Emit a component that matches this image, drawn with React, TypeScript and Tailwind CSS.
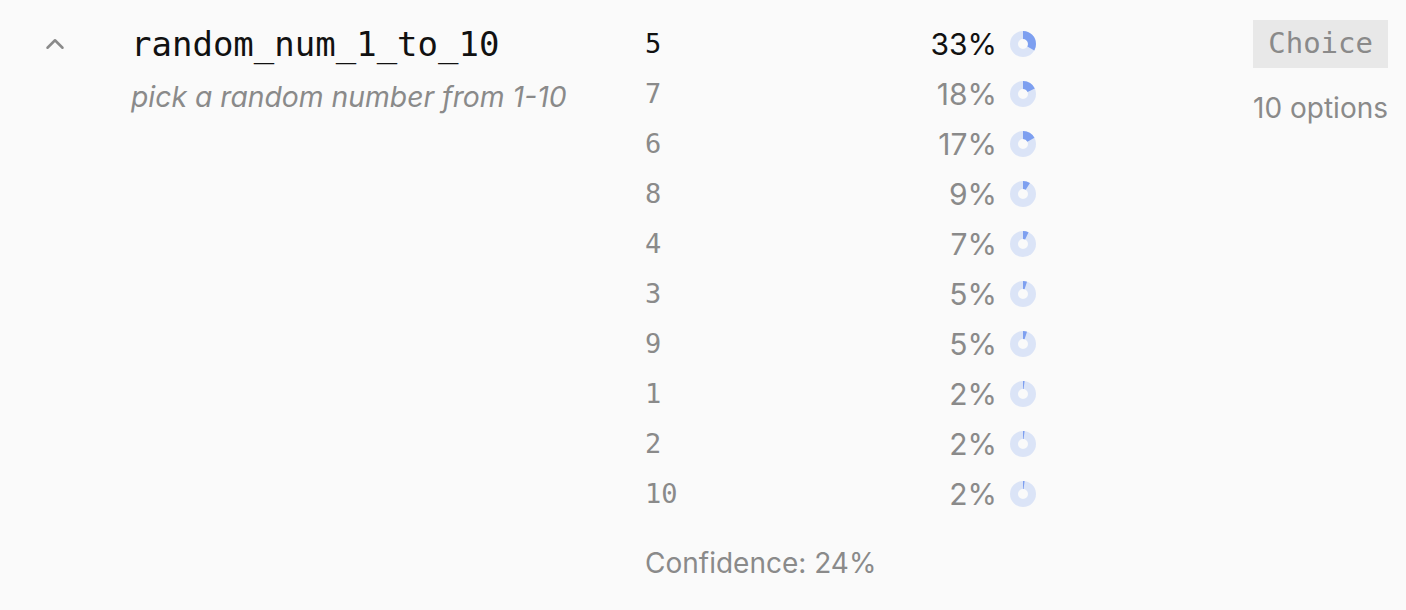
import { ChevronUp } from "lucide-react"

const options = [
  { label: "5", pct: 33 },
  { label: "7", pct: 18 },
  { label: "6", pct: 17 },
  { label: "8", pct: 9 },
  { label: "4", pct: 7 },
  { label: "3", pct: 5 },
  { label: "9", pct: 5 },
  { label: "1", pct: 2 },
  { label: "2", pct: 2 },
  { label: "10", pct: 2 },
]

const mono = "font-['DejaVu_Sans_Mono',monospace]"
const sans = "font-['Inter',sans-serif]"

function Donut({ pct }: { pct: number }) {
  const c = 2 * Math.PI * 9
  return (
    <svg width="28" height="28" viewBox="0 0 28 28">
      <circle cx="14" cy="14" r="9" fill="none" stroke="#dbe4f7" strokeWidth="8" />
      <circle
        cx="14"
        cy="14"
        r="9"
        fill="none"
        stroke="#7d9ff0"
        strokeWidth="8"
        strokeDasharray={`${(pct / 100) * c} ${c}`}
        transform="rotate(-90 14 14)"
      />
    </svg>
  )
}

export default function App() {
  return (
    <div className="w-[1406px] h-[610px] bg-[#fafafa] flex pt-[19px]">
      <div className="w-[131px] pl-[40px] h-[50px] flex items-center">
        <ChevronUp size={30} strokeWidth={2} className="text-[#8a8a8a]" />
      </div>

      <div className="w-[514px]">
        <div className={`h-[50px] flex items-center text-[34px] text-[#111] ${mono}`}>random_num_1_to_10</div>
        <div className={`text-[28.3px] italic text-[#8a8a8a] leading-[56px] ${sans}`}>pick a random number from 1-10</div>
      </div>

      <div className="w-[392px]">
        {options.map((o, i) => (
          <div key={o.label} className="h-[50px] flex items-center">
            <span className={`w-[283px] text-[27px] ${mono} ${i === 0 ? "text-[#111]" : "text-[#8a8a8a]"}`}>{o.label}</span>
            <span className={`w-[70px] text-right text-[30px] ${sans} whitespace-nowrap ${i === 0 ? "text-[#111]" : "text-[#8a8a8a]"}`}>
              {o.pct}%
            </span>
            <span className="ml-[12px] flex">
              <Donut pct={o.pct} />
            </span>
          </div>
        ))}
        <div className={`mt-[23px] text-[28px] text-[#8a8a8a] ${sans}`}>Confidence: 24%</div>
      </div>

      <div className="flex-1 flex flex-col items-end pr-[18px] mt-[1px]">
        <div className={`h-[48px] px-[15px] flex items-center bg-[#e8e8e8] text-[29px] text-[#8a8a8a] ${mono}`}>Choice</div>
        <div className={`mt-[19px] text-[28px] text-[#8a8a8a] ${sans}`}>10 options</div>
      </div>
    </div>
  )
}
